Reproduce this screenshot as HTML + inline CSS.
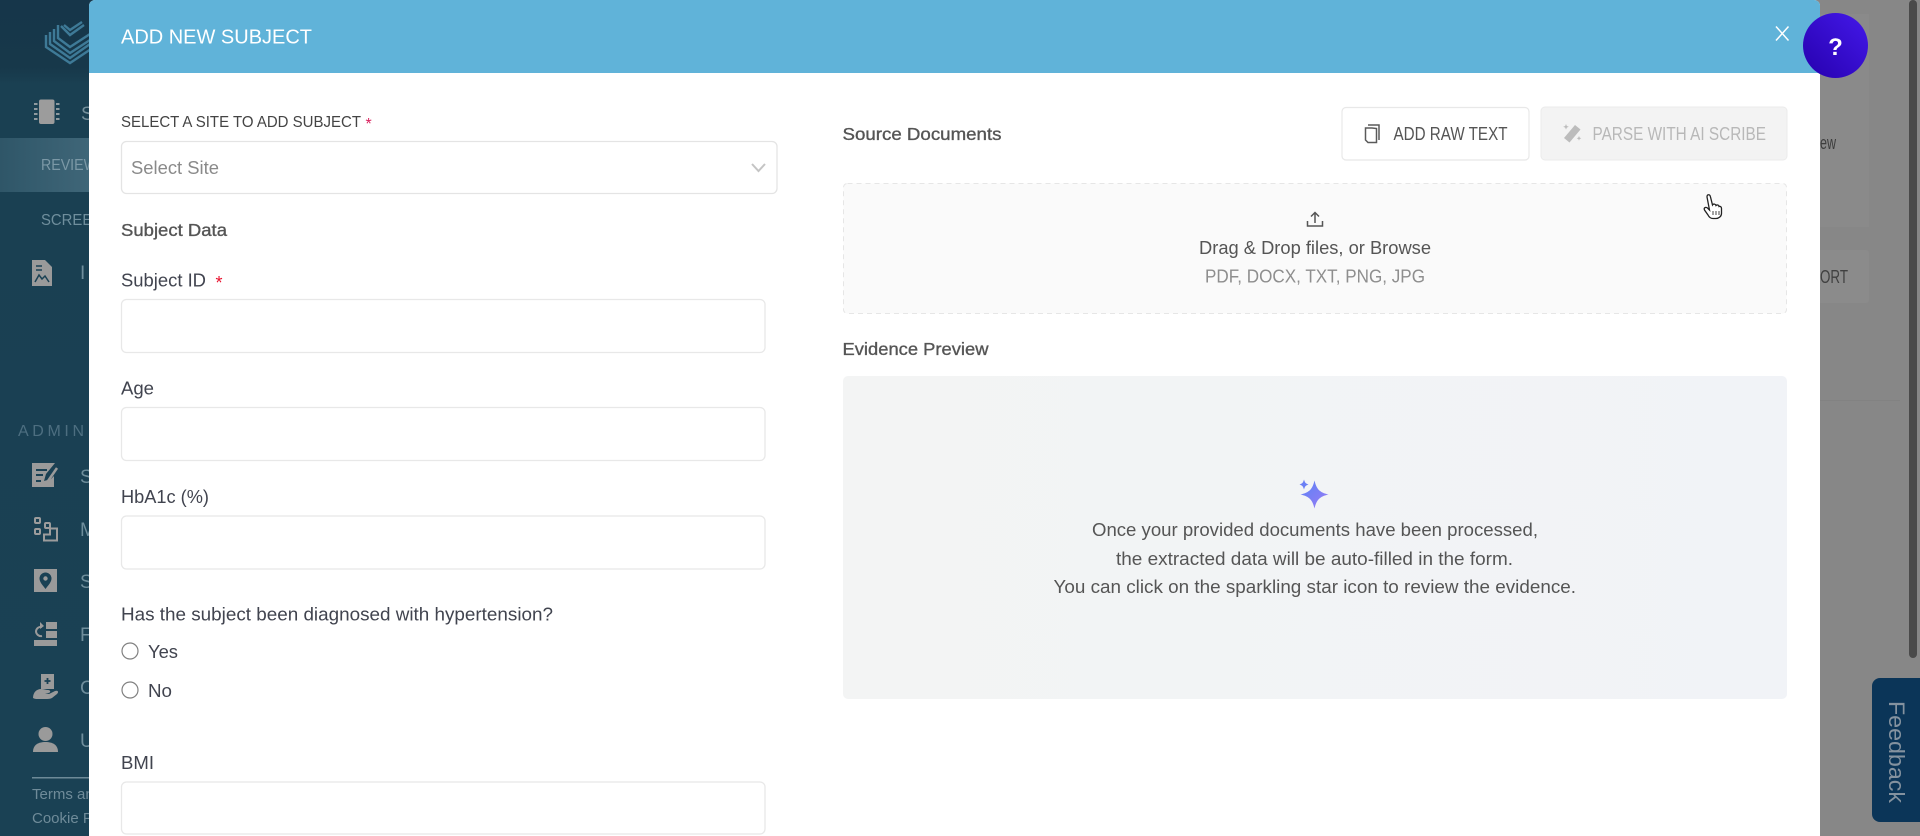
<!DOCTYPE html>
<html lang="en">
<head>
<meta charset="utf-8">
<title>Add New Subject</title>
<style>
html,body{margin:0;padding:0;width:1920px;height:836px;overflow:hidden;background:#878787}
svg{display:block;filter:blur(.35px)}
text{font-family:"Liberation Sans",Arial,sans-serif}
.med{font-weight:400;stroke:#555;stroke-width:.35px}
</style>
</head>
<body>
<svg xmlns="http://www.w3.org/2000/svg" width="1920" height="836" viewBox="0 0 1920 836">
<defs>
<linearGradient id="side" x1="0" y1="0" x2="0" y2="1"><stop offset="0" stop-color="#16364a"/><stop offset=".08" stop-color="#17384a"/><stop offset=".1" stop-color="#1a4052"/><stop offset="1" stop-color="#1a4154"/></linearGradient>
<linearGradient id="act" x1="0" y1="0" x2="1" y2="0"><stop offset="0" stop-color="#2f5668"/><stop offset="1" stop-color="#41687a"/></linearGradient>
<linearGradient id="help" x1="0" y1="1" x2="1" y2="0"><stop offset="0" stop-color="#2600ad"/><stop offset="1" stop-color="#4419ea"/></linearGradient>
<linearGradient id="star" x1="0" y1="0" x2="1" y2="1"><stop offset="0" stop-color="#5a82f5"/><stop offset="1" stop-color="#9a7cf5"/></linearGradient>
<linearGradient id="evid" x1="0" y1="0" x2="1" y2="0"><stop offset="0" stop-color="#f3f4f4"/><stop offset="1" stop-color="#f1f3f7"/></linearGradient>
</defs>

<!-- right backdrop -->
<rect x="1800" y="0" width="120" height="836" fill="#878787"/>
<rect x="1800" y="14" width="69" height="213" fill="#8a8a8a"/>
<rect x="1800" y="250" width="69" height="53" rx="3" fill="#8b8b8b"/>
<text x="1820" y="149" font-size="18" fill="#3d3d3d" textLength="16" lengthAdjust="spacingAndGlyphs">ew</text>
<text x="1820" y="283" font-size="18" fill="#404040" textLength="28" lengthAdjust="spacingAndGlyphs">ORT</text>
<rect x="1909" y="0" width="8" height="658" rx="4" fill="#4a4a4a"/>
<rect x="1820" y="400" width="80" height="1" fill="#828282"/>
<path d="M1872 686a8 8 0 0 1 8-8h40v144h-40a8 8 0 0 1-8-8z" fill="#0b3558"/>
<text transform="translate(1889 701) rotate(90)" font-size="22" fill="#84929f" textLength="102" lengthAdjust="spacingAndGlyphs">Feedback</text>

<!-- sidebar -->
<rect x="0" y="0" width="100" height="836" fill="url(#side)"/>
<rect x="0" y="138" width="100" height="54" fill="url(#act)"/>
<g fill="none" stroke="#3e7a97" stroke-width="2.4">
<path d="M46 35V47L70 63L94 47"/>
<path d="M50 32V44L70 58L90 44"/>
<path d="M54 29V41L70 53L90 40"/>
<path d="M58 25V38L70 47L90 34"/>
<path d="M61 26L70 35L84 25"/>
<path d="M64 25L70 30L82 22"/>
</g>
<!-- chip -->
<rect x="39" y="99.500" width="15.500" height="24.500" rx="2" fill="#9c9c9c"/>
<g fill="#8f9a9f"><rect x="34" y="103" width="3.500" height="2"/><rect x="34" y="108" width="3.500" height="2"/><rect x="34" y="113" width="3.500" height="2"/><rect x="34" y="118" width="3.500" height="2"/><rect x="56" y="103" width="3.500" height="2"/><rect x="56" y="108" width="3.500" height="2"/><rect x="56" y="113" width="3.500" height="2"/><rect x="56" y="118" width="3.500" height="2"/></g>
<text x="81" y="120" font-size="19" fill="#75909c">S</text>
<text x="41" y="170" font-size="16" fill="#7b98a6" textLength="56" lengthAdjust="spacingAndGlyphs">REVIEW</text>
<text x="41" y="225" font-size="16" fill="#6f8e9c" textLength="62" lengthAdjust="spacingAndGlyphs">SCREEN</text>
<path d="M32 260h13l7 7v19H32z" fill="#9a9a9a"/>
<path d="M36 266h6M36 270h6M35 282l4-7 3 4 3-3 4 6" fill="none" stroke="#1a4154" stroke-width="1.500"/>
<text x="80" y="279" font-size="19" fill="#6f8e9c">I</text>
<text x="18" y="436" font-size="16" fill="#4d6e80" textLength="66" lengthAdjust="spacing">ADMIN</text>
<!-- edit -->
<path d="M32 463h23l-9 11-2 7 7-2 3-3v11H32z" fill="#9a9a9a"/>
<path d="M36 470h11M36 475h7M36 481h5" stroke="#1a4154" stroke-width="2" fill="none"/>
<path d="M48 481l9-13" stroke="#9a9a9a" stroke-width="2.500" fill="none"/>
<text x="80" y="483" font-size="19" fill="#6f8e9c">S</text>
<!-- flow -->
<g fill="none" stroke="#9c9c9c" stroke-width="2"><rect x="35" y="518" width="5" height="5" rx="1"/><rect x="35" y="529" width="5" height="5" rx="1"/><rect x="45" y="523" width="5" height="5" rx="1"/><path d="M44 540.500v-6h6v-6h7v12z"/></g>
<text x="80" y="536" font-size="19" fill="#6f8e9c">M</text>
<!-- location -->
<rect x="34" y="569" width="23" height="23" fill="#9a9a9a"/>
<path d="M45.500 589c-3-4-6-7-6-10.500a6 6 0 0 1 12 0c0 3.500-3 6.500-6 10.500z" fill="#1a4154"/><circle cx="45.500" cy="578.500" r="2.200" fill="#9a9a9a"/>
<text x="80" y="588" font-size="19" fill="#6f8e9c">S</text>
<!-- forward -->
<g fill="#9a9a9a"><rect x="46" y="622" width="11" height="7"/><rect x="46" y="631" width="11" height="7"/><rect x="34" y="640" width="23" height="6"/></g>
<path d="M42 627a5 5 0 0 0-6 4 5 5 0 0 0 6 5" fill="none" stroke="#9a9a9a" stroke-width="2"/><path d="M40 622l4 4-4 3z" fill="#9a9a9a"/>
<text x="80" y="641" font-size="19" fill="#6f8e9c">F</text>
<!-- care -->
<path d="M41 674h13v15H41z" fill="#9a9a9a"/><path d="M47.500 678v6M44.500 681h6" stroke="#1a4154" stroke-width="1.800"/>
<path d="M33 698c0-6 4-9 8-9 3 0 5 1 7 1 3 0 3 3 0 3h-3l4 1 6-3c3-1 4 1 2 3l-5 4c-2 1-4 1-7 1H37c-1 0-2 0-4-1z" fill="#9a9a9a"/>
<text x="80" y="694" font-size="19" fill="#6f8e9c">C</text>
<!-- user -->
<circle cx="45.500" cy="734" r="7" fill="#9a9a9a"/><path d="M33 752c0-7 5-10 12.500-10S58 745 58 752z" fill="#9a9a9a"/>
<text x="80" y="747" font-size="19" fill="#6f8e9c">U</text>
<rect x="32" y="777" width="60" height="1.500" fill="#6d8a98"/>
<text x="32" y="799" font-size="15" fill="#6f8b99">Terms and</text>
<text x="32" y="823" font-size="15" fill="#6f8b99">Cookie Policy</text>

<!-- modal -->
<path d="M89 6a6 6 0 0 1 6-6h1719a6 6 0 0 1 6 6v830H89z" fill="#fff"/>
<path d="M89 6a6 6 0 0 1 6-6h1719a6 6 0 0 1 6 6v67H89z" fill="#60b3d9"/>
<text x="121" y="43.500" font-size="20.500" fill="#fff" textLength="191" lengthAdjust="spacingAndGlyphs">ADD NEW SUBJECT</text>
<path d="M1776 26.500l12.500 14M1788.500 26.500l-12.500 14" stroke="#fff" stroke-width="1.500" fill="none"/>

<!-- left column -->
<text x="121" y="127" font-size="15.500" fill="#444" textLength="240" lengthAdjust="spacingAndGlyphs">SELECT A SITE TO ADD SUBJECT</text>
<text x="365.500" y="129" font-size="16" fill="#d81e5b">*</text>
<rect x="121.500" y="141.500" width="655.500" height="52" rx="5" fill="#fff" stroke="#e4e4e4" stroke-width="1.300"/>
<text x="131" y="174" font-size="18" fill="#8a8a8a" textLength="88" lengthAdjust="spacingAndGlyphs">Select Site</text>
<path d="M752 164l6.500 7 6.500-7" fill="none" stroke="#c4c4c4" stroke-width="2"/>
<text x="121" y="236" font-size="17.500" class="med" fill="#555" textLength="106" lengthAdjust="spacingAndGlyphs">Subject Data</text>
<text x="121" y="286.500" font-size="18" fill="#41444f" textLength="85" lengthAdjust="spacingAndGlyphs">Subject ID</text>
<text x="215.500" y="289" font-size="18" fill="#e8112d">*</text>
<rect x="121.500" y="299.500" width="643.500" height="53" rx="5" fill="#fff" stroke="#e8e8e8" stroke-width="1.300"/>
<text x="121" y="394.500" font-size="18" fill="#41444f" textLength="33" lengthAdjust="spacingAndGlyphs">Age</text>
<rect x="121.500" y="407.500" width="643.500" height="53" rx="5" fill="#fff" stroke="#e8e8e8" stroke-width="1.300"/>
<text x="121" y="503" font-size="18" fill="#41444f" textLength="88" lengthAdjust="spacingAndGlyphs">HbA1c (%)</text>
<rect x="121.500" y="516" width="643.500" height="53" rx="5" fill="#fff" stroke="#e8e8e8" stroke-width="1.300"/>
<text x="121" y="620.500" font-size="18" fill="#41444f" textLength="432" lengthAdjust="spacingAndGlyphs">Has the subject been diagnosed with hypertension?</text>
<circle cx="130" cy="651" r="8" fill="#fff" stroke="#808080" stroke-width="1.200"/>
<text x="148" y="658" font-size="18" fill="#41444f" textLength="30" lengthAdjust="spacingAndGlyphs">Yes</text>
<circle cx="130" cy="690" r="8" fill="#fff" stroke="#808080" stroke-width="1.200"/>
<text x="148" y="697" font-size="18" fill="#41444f" textLength="24" lengthAdjust="spacingAndGlyphs">No</text>
<text x="121" y="769" font-size="18" fill="#41444f" textLength="33" lengthAdjust="spacingAndGlyphs">BMI</text>
<rect x="121.500" y="782" width="643.500" height="52" rx="5" fill="#fff" stroke="#e8e8e8" stroke-width="1.300"/>

<!-- right column -->
<text x="842.500" y="140" font-size="17.500" class="med" fill="#555" textLength="159" lengthAdjust="spacingAndGlyphs">Source Documents</text>
<rect x="1342" y="107.500" width="187" height="52.500" rx="4" fill="#fff" stroke="#e8e8e8" stroke-width="1.200"/>
<path d="M1372 128h-6.500v12l2.500 2.500h8.500v-14z" fill="none" stroke="#5a5a5a" stroke-width="1.500"/>
<path d="M1368 125h11v15" fill="none" stroke="#5a5a5a" stroke-width="1.500"/>
<text x="1393.500" y="140" font-size="18" fill="#555" textLength="114" lengthAdjust="spacingAndGlyphs">ADD RAW TEXT</text>
<rect x="1541" y="107" width="246" height="53" rx="4" fill="#f3f3f3" stroke="#ebebeb" stroke-width="1"/>
<path d="M1564 138l11-13 5.500 4.500-11 13z" fill="#bcbcbc"/>
<path d="M1566 124l.8 2 2 .8-2 .8-.8 2-.8-2-2-.8 2-.8zM1579 136l.7 1.600 1.600.7-1.600.7-.7 1.600-.7-1.600-1.600-.7 1.600-.7z" fill="#bcbcbc"/>
<text x="1592.500" y="140" font-size="18" fill="#b8b8b8" textLength="173.500" lengthAdjust="spacingAndGlyphs">PARSE WITH AI SCRIBE</text>

<rect x="843.500" y="183.500" width="943" height="130" rx="4" fill="#fafafa" stroke="#e6e6e6" stroke-width="1" stroke-dasharray="5 4"/>
<path d="M1315 213v10M1311 216.500l4-4 4 4M1307.500 221v5h15v-5" fill="none" stroke="#555" stroke-width="1.500"/>
<text x="1199" y="254" font-size="18" fill="#555" textLength="232" lengthAdjust="spacingAndGlyphs">Drag &amp; Drop files, or Browse</text>
<text x="1205" y="282.500" font-size="18" fill="#8e8e8e" textLength="220" lengthAdjust="spacingAndGlyphs">PDF, DOCX, TXT, PNG, JPG</text>

<text x="842.500" y="355" font-size="17.500" class="med" fill="#555" textLength="146" lengthAdjust="spacingAndGlyphs">Evidence Preview</text>
<rect x="843" y="376" width="944" height="323" rx="5" fill="url(#evid)"/>
<path d="M1314.500 480.500c2 8.500 5 12 14 14-9 2-12 5.500-14 14-2-8.500-5-12-14-14 9-2 12-5.500 14-14z" fill="url(#star)"/>
<path d="M1304 479.500c.8 3 1.800 4.200 4.500 5-2.700.8-3.700 2-4.500 5-.8-3-1.800-4.200-4.500-5 2.700-.8 3.700-2 4.500-5z" fill="#6a7ff5"/>
<g font-size="18" fill="#555">
<text x="1092" y="536" textLength="446" lengthAdjust="spacingAndGlyphs">Once your provided documents have been processed,</text>
<text x="1116" y="565" textLength="397" lengthAdjust="spacingAndGlyphs">the extracted data will be auto-filled in the form.</text>
<text x="1053.500" y="593" textLength="522.500" lengthAdjust="spacingAndGlyphs">You can click on the sparkling star icon to review the evidence.</text>
</g>

<!-- help -->
<circle cx="1835.500" cy="45.500" r="32.500" fill="url(#help)"/>
<text x="1835.500" y="55" font-size="24" font-weight="700" fill="#fff" text-anchor="middle">?</text>

<!-- cursor -->
<path d="M1707 197c0-3 3-3 3.500 0l2 8c1-1.500 3-1 3.500 .5 1-1 3-.5 3 1 1.500-.5 2.500 .5 2.500 2v5c0 3-3 5-5.500 5h-3c-2.500 0-4-1.500-5-3.500l-3.500-5c-1-2 1-3.500 3-2l2 2z" fill="#fff" stroke="#222" stroke-width="1.300"/>
<path d="M1713 211v4M1716 211v4M1719 211v4" stroke="#444" stroke-width="1"/>
</svg>
</body>
</html>
